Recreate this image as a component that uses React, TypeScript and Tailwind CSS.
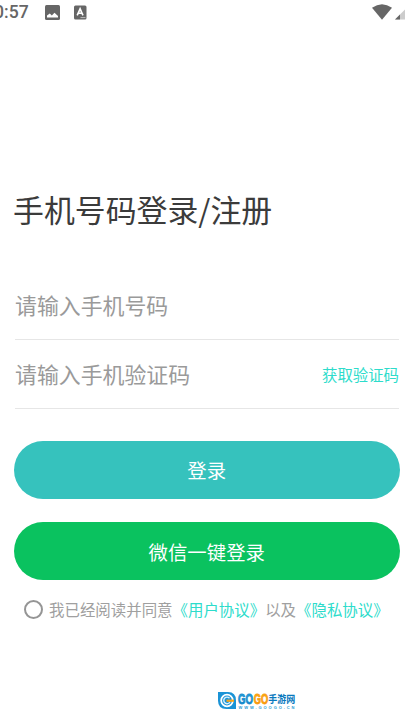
const StatusBar = () => {
  return (
    <div className="flex h-6 w-full items-center justify-between overflow-hidden text-[#666666]">
      <div className="flex items-center">
        <span className="-ml-[6px] w-[35px] font-['Roboto'] text-[17.6px] leading-6 font-medium">0:57</span>
        <svg className="ml-[16px]" width="15" height="15" viewBox="0 0 15 15">
          <rect width="15" height="15" rx="1.5" fill="currentColor" />
          <path d="M2 12.5V10.5L4.8 8.5L6.8 10.5L9.5 7.8L13 11V12.5Z" fill="#fff" />
        </svg>
        <svg className="ml-[14px]" width="13" height="15" viewBox="0 0 13 15">
          <rect y="0.5" width="12.5" height="14" rx="1.5" fill="currentColor" />
          <path
            d="M3.2 10.3L6.1 3.8L9 10.3M4.3 8.2H7.9"
            fill="none"
            stroke="#fff"
            strokeWidth="1.6"
          />
          <path d="M6.5 12.6H11.5" stroke="#bbb" strokeWidth="1" />
        </svg>
      </div>
      <div className="flex items-center">
        <svg width="20" height="16" viewBox="0 0 20 16">
          <path d="M0 3.8Q10 -3.2 20 3.8L10 15.8Z" fill="currentColor" />
        </svg>
        <svg className="ml-[3px]" width="10" height="16" viewBox="0 0 10 16">
          <path d="M0 15.5L10 5.5V15.5Z" fill="#cccccc" />
          <path d="M0 15.5L5 10.5V15.5Z" fill="currentColor" />
        </svg>
      </div>
    </div>
  );
};

const Logo = () => {
  return (
    <svg width="80" height="22" viewBox="0 0 80 22">
      <defs>
        <linearGradient id="blue" x1="0" y1="0" x2="0" y2="1">
          <stop offset="0" stopColor="#35b6ee" />
          <stop offset="1" stopColor="#0872bd" />
        </linearGradient>
        <linearGradient id="orange" x1="0" y1="0" x2="0" y2="1">
          <stop offset="0" stopColor="#ffbd19" />
          <stop offset="1" stopColor="#f58a08" />
        </linearGradient>
      </defs>
      <path d="M1 2H11Q19 2 19 10.5V19H9.5Q1 19 1 10.5Z" fill="#1b93d6" />
      <circle cx="10" cy="10.5" r="5.8" fill="none" stroke="#fff" strokeWidth="1.8" />
      <path d="M12.5 8.2A3.3 3.3 0 1 0 13 12" fill="none" stroke="#d7f1ff" strokeWidth="1.4" />
      <path d="M9.5 9.6H17V11.8H9.5Z" fill="#f9a51a" />
      <g fontFamily="Liberation Sans, sans-serif" fontWeight="bold" fontSize="15.5">
        <text x="21" y="14" textLength="15" lengthAdjust="spacingAndGlyphs" fill="url(#blue)" stroke="#168dce" strokeWidth="0.9">
          GO
        </text>
        <text x="36.7" y="14" textLength="14.5" lengthAdjust="spacingAndGlyphs" fill="url(#orange)" stroke="#f99d10" strokeWidth="0.9">
          GO
        </text>
      </g>
      <text x="51.3" y="12.6" fontFamily="Noto Sans CJK SC, sans-serif" fontWeight="700" fontSize="10.5" textLength="27" lengthAdjust="spacingAndGlyphs" fill="#0878bd">
        手游网
      </text>
      <text x="21.5" y="19" fontFamily="Liberation Sans, sans-serif" fontWeight="bold" fontSize="4" textLength="56" fill="#279bd5">
        WWW.GOOGO.CN
      </text>
    </svg>
  );
};

export default function App() {
  return (
    <main className="flex h-[720px] w-full flex-col overflow-hidden bg-white font-['Noto_Sans_CJK_SC',sans-serif]">
      <StatusBar />
      <h1 className="mt-[162px] pl-[13px] text-[30.9px] leading-[46px] text-[#3b3b3b]">手机号码登录/注册</h1>

      <div className="mt-10 mr-[6px] ml-[15px] flex h-[68px] items-center border-b border-[#e6e6e6] text-[21.9px] text-[#9a9a9a]">
        <span>请输入手机号码</span>
      </div>
      <div className="mr-[6px] ml-[15px] flex h-[69px] items-center justify-between border-b border-[#e6e6e6]">
        <span className="text-[21.9px] text-[#9a9a9a]">请输入手机验证码</span>
        <span className="pt-px text-[15.4px] text-[#2ddccb]">获取验证码</span>
      </div>

      <div className="mt-8 mr-[5px] ml-[13.5px] flex flex-col gap-[23px] text-[19.4px] text-white">
        <button className="h-[58px] rounded-full bg-[#36c2bd]">登录</button>
        <button className="h-[58px] rounded-full bg-[#0ac25f] pt-px">微信一键登录</button>
      </div>

      <div className="mt-[17px] ml-6 flex h-6 items-center text-[15.45px] whitespace-nowrap text-[#a0a0a0]">
        <span className="mr-[6px] h-[19px] w-[19px] shrink-0 rounded-full border-2 border-[#959595]" />
        <p className="pt-px">
          我已经阅读并同意
          <span className="text-[#2ddccb]">《用户协议》</span>
          以及
          <span className="text-[#2ddccb]">《隐私协议》</span>
        </p>
      </div>

      <div className="mt-auto mb-[8px] ml-[217px]">
        <Logo />
      </div>
    </main>
  );
}
